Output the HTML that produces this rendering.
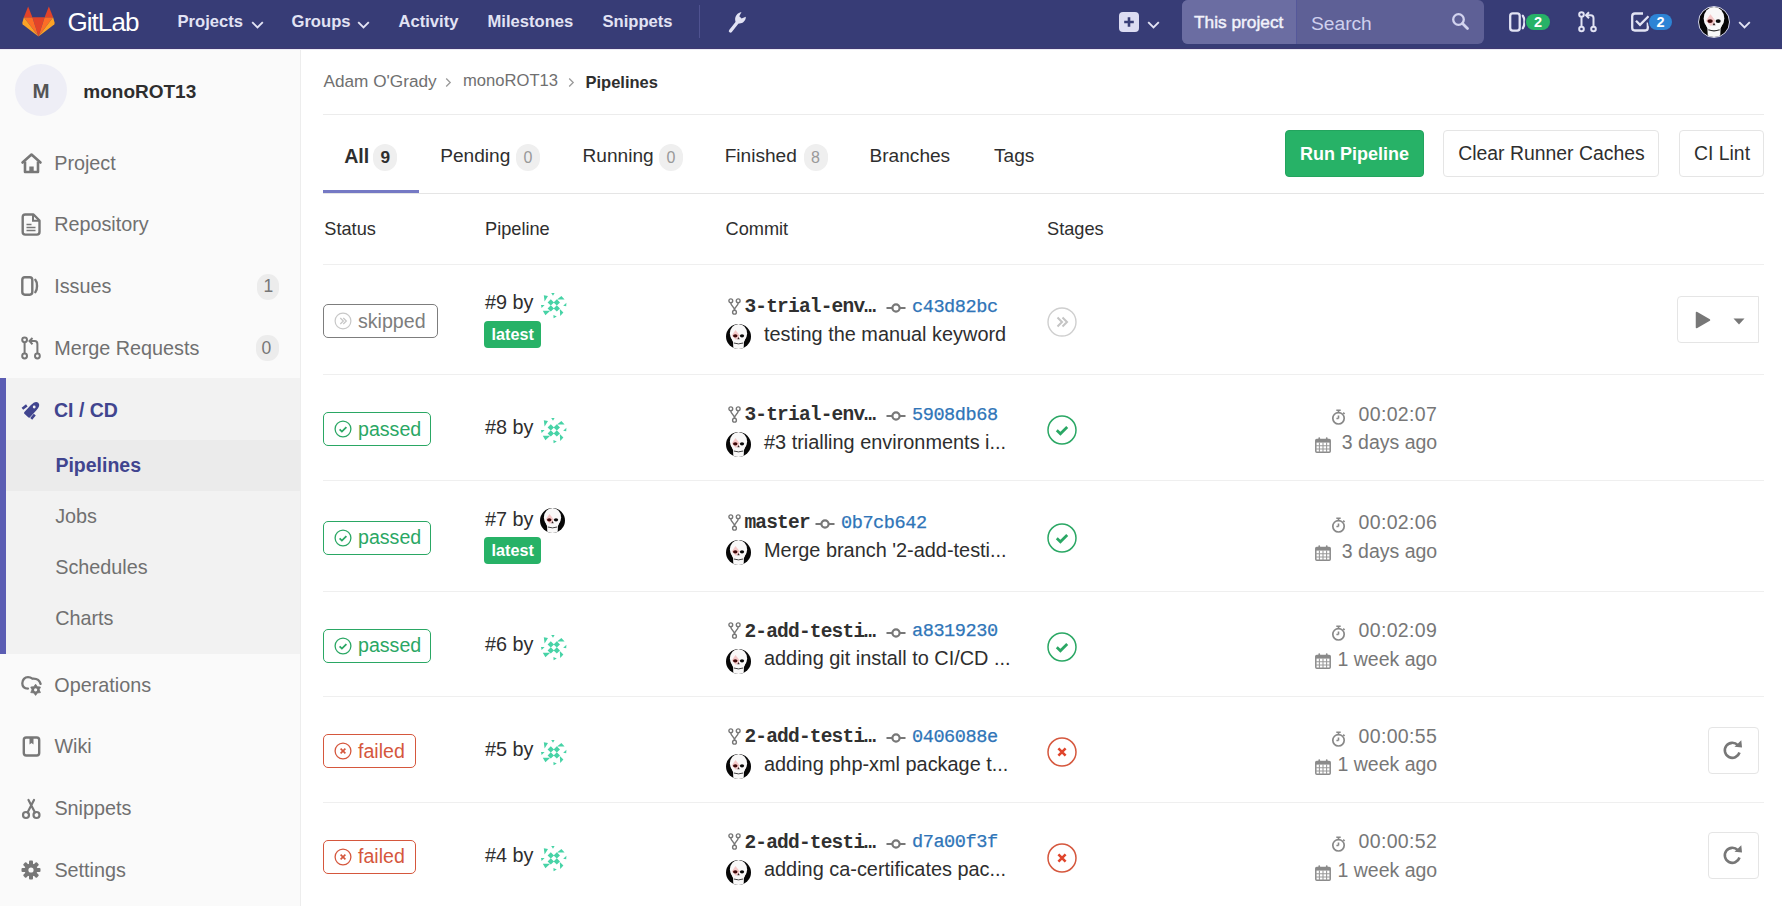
<!DOCTYPE html>
<html><head><meta charset="utf-8">
<style>
*{margin:0;padding:0;box-sizing:border-box}
html,body{width:1782px;height:906px;overflow:hidden;background:#fff;font-family:"Liberation Sans",sans-serif;color:#2e2e2e}
.a{position:absolute;white-space:nowrap;line-height:1}
svg{position:absolute;display:block;overflow:visible}
</style></head><body>
<div style="position:absolute;left:0px;top:0px;width:1782px;height:49px;background:#373c76"></div>
<div style="position:absolute;left:0px;top:48px;width:1782px;height:1px;background:#3e3872"></div>
<svg style="left:22px;top:6px;" width="33" height="31" viewBox="0 0 35 32" preserveAspectRatio="none">
    <polygon points="17.5,31.5 24,11.5 11,11.5" fill="#e24329"/>
    <polygon points="17.5,31.5 11,11.5 2,11.5" fill="#fc6d26"/>
    <polygon points="2,11.5 0.3,17.5 0.8,19 17.5,31.5" fill="#fca326"/>
    <polygon points="2,11.5 11,11.5 6.5,0.5" fill="#e24329"/>
    <polygon points="17.5,31.5 24,11.5 33,11.5" fill="#fc6d26"/>
    <polygon points="33,11.5 34.7,17.5 34.2,19 17.5,31.5" fill="#fca326"/>
    <polygon points="33,11.5 24,11.5 28.5,0.5" fill="#e24329"/></svg>
<div class="a" style="left:67.5px;top:8.90px;font-size:26px;color:#fff;font-weight:normal;font-family:'Liberation Sans',sans-serif;letter-spacing:-0.95px">GitLab</div>
<div class="a" style="left:177.5px;top:13.99px;font-size:16.6px;color:#e2e3f4;font-weight:bold;font-family:'Liberation Sans',sans-serif;">Projects</div>
<svg style="left:250.5px;top:20.5px;" width="13" height="8" viewBox="0 0 13 8" preserveAspectRatio="none"><path d="M1.2 1.2l5.3 5.3 5.3-5.3" fill="none" stroke="#e2e3f4" stroke-width="1.9"/></svg>
<div class="a" style="left:291.5px;top:13.99px;font-size:16.6px;color:#e2e3f4;font-weight:bold;font-family:'Liberation Sans',sans-serif;">Groups</div>
<svg style="left:356.5px;top:20.5px;" width="13" height="8" viewBox="0 0 13 8" preserveAspectRatio="none"><path d="M1.2 1.2l5.3 5.3 5.3-5.3" fill="none" stroke="#e2e3f4" stroke-width="1.9"/></svg>
<div class="a" style="left:398.5px;top:13.99px;font-size:16.6px;color:#e2e3f4;font-weight:bold;font-family:'Liberation Sans',sans-serif;">Activity</div>
<div class="a" style="left:487.5px;top:13.99px;font-size:16.6px;color:#e2e3f4;font-weight:bold;font-family:'Liberation Sans',sans-serif;">Milestones</div>
<div class="a" style="left:602.5px;top:13.99px;font-size:16.6px;color:#e2e3f4;font-weight:bold;font-family:'Liberation Sans',sans-serif;">Snippets</div>
<div style="position:absolute;left:699px;top:5px;width:1px;height:33px;background:#4f5290"></div>
<svg style="left:727px;top:10px;" width="21" height="24" viewBox="0 0 21 24" preserveAspectRatio="none"><path d="M3.5 21 L11 11.5" fill="none" stroke="#e2e3f4" stroke-width="3.4" stroke-linecap="round"/><path d="M9.2 12.8 C7 9.5 8 3.5 14.5 2 L12.3 6.2 L14.6 8.6 L18.8 6.8 C19 11.5 14.5 14.5 10.8 13.2 Z" fill="#e2e3f4"/></svg>
<div style="position:absolute;left:1119px;top:12px;width:20px;height:20px;border-radius:4px;background:#dcdcf2"></div>
<svg style="left:1119px;top:12px;" width="20" height="20" viewBox="0 0 20 20" preserveAspectRatio="none"><path d="M10 5.2v9.6M5.2 10h9.6" stroke="#373c76" stroke-width="2.6"/></svg>
<svg style="left:1146.5px;top:20.5px;" width="13" height="8" viewBox="0 0 13 8" preserveAspectRatio="none"><path d="M1.2 1.2l5.3 5.3 5.3-5.3" fill="none" stroke="#e2e3f4" stroke-width="1.9"/></svg>
<div style="position:absolute;left:1182px;top:0px;width:302px;height:44px;border-radius:6px;background:#5e6096;overflow:hidden"></div>
<div style="position:absolute;left:1182px;top:0px;width:114px;height:44px;border-radius:6px 0 0 6px;background:#6b6da2"></div>
<div style="position:absolute;left:1296px;top:0px;width:1px;height:44px;background:#55589a"></div>
<div class="a" style="left:1194.0px;top:14.29px;font-size:17.3px;color:#f2f2fb;font-weight:normal;font-family:'Liberation Sans',sans-serif;-webkit-text-stroke:0.45px #f2f2fb">This project</div>
<div class="a" style="left:1311.0px;top:13.68px;font-size:19.2px;color:#cfd0ee;font-weight:normal;font-family:'Liberation Sans',sans-serif;">Search</div>
<svg style="left:1451px;top:12px;" width="19" height="19" viewBox="0 0 19 19" preserveAspectRatio="none"><circle cx="7.5" cy="7.5" r="5.3" fill="none" stroke="#d2d3ef" stroke-width="2.3"/><path d="M11.5 11.5l5 5" stroke="#d2d3ef" stroke-width="2.8" stroke-linecap="round"/></svg>
<svg style="left:1509px;top:12px;" width="20" height="20" viewBox="0 0 20 20" preserveAspectRatio="none"><rect x="1.2" y="1.3" width="9.5" height="17.4" rx="2.6" fill="none" stroke="#e2e3f4" stroke-width="2.3"/><path d="M13.8 3.8c2.2 2.5 2.2 9.9 0 12.4" fill="none" stroke="#e2e3f4" stroke-width="2.3" stroke-linecap="round"/></svg>
<div style="position:absolute;left:1526px;top:14px;width:24px;height:16px;border-radius:8px;background:#27b267;box-shadow:0 0 0 1.2px #373c76"></div>
<div class="a" style="left:1534.0px;top:14.68px;font-size:14.5px;color:#fff;font-weight:bold;font-family:'Liberation Sans',sans-serif;">2</div>
<svg style="left:1578px;top:11px;" width="20" height="22" viewBox="0 0 20 22" preserveAspectRatio="none"><circle cx="3.5" cy="3.5" r="2.3" fill="none" stroke="#e2e3f4" stroke-width="2"/><circle cx="3.5" cy="18" r="2.3" fill="none" stroke="#e2e3f4" stroke-width="2"/><circle cx="15.5" cy="18" r="2.3" fill="none" stroke="#e2e3f4" stroke-width="2"/><path d="M3.5 6v9.5M15.5 15.5V7c0-1.7-1-2.8-2.8-2.8H9" fill="none" stroke="#e2e3f4" stroke-width="2"/><path d="M11 1.2l-3 3 3 3" fill="none" stroke="#e2e3f4" stroke-width="2"/></svg>
<svg style="left:1631px;top:12px;" width="20" height="20" viewBox="0 0 20 20" preserveAspectRatio="none"><path d="M16.8 10.5v5.3c0 1.6-1.1 2.7-2.7 2.7H3.9c-1.6 0-2.7-1.1-2.7-2.7V4.2c0-1.6 1.1-2.7 2.7-2.7H12" fill="none" stroke="#e2e3f4" stroke-width="2.3"/><path d="M5 8.8l4 4 8.5-8.5" fill="none" stroke="#e2e3f4" stroke-width="2.3"/></svg>
<div style="position:absolute;left:1649px;top:14px;width:23px;height:16px;border-radius:8px;background:#2d84d5;box-shadow:0 0 0 1.2px #373c76"></div>
<div class="a" style="left:1656.5px;top:14.68px;font-size:14.5px;color:#fff;font-weight:bold;font-family:'Liberation Sans',sans-serif;">2</div>
<div style="position:absolute;left:1698px;top:6px;width:32px;height:32px;border-radius:50%;background:#070707;border:1.5px solid #d6d7f0;overflow:hidden"><svg style="left:0;top:0" width="100%" height="100%" viewBox="0 0 100 100"><ellipse cx="50" cy="38" rx="34.5" ry="38" fill="#f9f8f8"/><path d="M20 52h60l-8 20-1.5 30h-41l-1.5-30z" fill="#f9f8f8"/><polygon points="38,24 23,46 40,64 55,46" fill="#f2a0a0" opacity="0.55"/><ellipse cx="37" cy="47" rx="9" ry="6.5" fill="#3d0808"/><ellipse cx="64" cy="47" rx="8.5" ry="6.5" fill="#0a0a0a"/><path d="M50 52l-5 9h10z" fill="#3a2020"/><path d="M31 76 Q50 83 69 76" fill="none" stroke="#2a2a2a" stroke-width="3.5"/></svg></div>
<svg style="left:1737.5px;top:20.5px;" width="13" height="8" viewBox="0 0 13 8" preserveAspectRatio="none"><path d="M1.2 1.2l5.3 5.3 5.3-5.3" fill="none" stroke="#e2e3f4" stroke-width="1.9"/></svg>
<div style="position:absolute;left:0px;top:49px;width:300px;height:857px;background:#fafafa"></div>
<div style="position:absolute;left:300px;top:49px;width:1px;height:857px;background:#ededed"></div>
<div style="position:absolute;left:15px;top:64px;width:52px;height:52px;border-radius:50%;background:#eeeef6"></div>
<div class="a" style="left:32.5px;top:81.08px;font-size:20.5px;color:#555;font-weight:bold;font-family:'Liberation Sans',sans-serif;">M</div>
<div class="a" style="left:83.3px;top:82.35px;font-size:19px;color:#2e2e2e;font-weight:bold;font-family:'Liberation Sans',sans-serif;">monoROT13</div>
<svg style="left:20px;top:152px;" width="23" height="22" viewBox="0 0 23 22" preserveAspectRatio="none"><path d="M2.5 10.5 L11.5 2.5 L20.5 10.5" fill="none" stroke="#777" stroke-width="2.6" stroke-linejoin="round" stroke-linecap="round"/><path d="M5 9.5v10.5h13V9.5" fill="none" stroke="#777" stroke-width="2.6" stroke-linejoin="round"/><rect x="9.3" y="14.5" width="4.4" height="5.5" fill="#777"/></svg>
<div class="a" style="left:54.2px;top:153.87px;font-size:19.8px;color:#707070;font-weight:normal;font-family:'Liberation Sans',sans-serif;">Project</div>
<svg style="left:21px;top:213px;" width="21" height="23" viewBox="0 0 21 23" preserveAspectRatio="none"><path d="M4.3 1.5h8.2l6 6v11.5c0 1.6-1.2 2.6-2.6 2.6H4.3c-1.6 0-2.6-1-2.6-2.6V4.1c0-1.6 1-2.6 2.6-2.6z" fill="none" stroke="#777" stroke-width="2.4" stroke-linejoin="round"/><path d="M12 1.8v6h6" fill="none" stroke="#777" stroke-width="2"/><path d="M5.5 11.5h5M5.5 14.5h9M5.5 17.5h9" stroke="#777" stroke-width="1.6"/></svg>
<div class="a" style="left:54.2px;top:215.37px;font-size:19.8px;color:#707070;font-weight:normal;font-family:'Liberation Sans',sans-serif;">Repository</div>
<svg style="left:21px;top:276px;" width="20" height="20" viewBox="0 0 20 20" preserveAspectRatio="none"><rect x="1.3" y="1.3" width="10" height="17.4" rx="2.6" fill="none" stroke="#777" stroke-width="2.4"/><path d="M14.3 3.8c2.3 2.5 2.3 9.9 0 12.4" fill="none" stroke="#777" stroke-width="2.4" stroke-linecap="round"/></svg>
<div class="a" style="left:54.2px;top:276.87px;font-size:19.8px;color:#707070;font-weight:normal;font-family:'Liberation Sans',sans-serif;">Issues</div>
<div style="position:absolute;left:257px;top:273.5px;width:22px;height:26px;border-radius:11px;background:#ececec"></div>
<div class="a" style="left:263.5px;top:278.12px;font-size:17.5px;color:#777;font-weight:normal;font-family:'Liberation Sans',sans-serif;">1</div>
<svg style="left:21px;top:336px;" width="21" height="24" viewBox="0 0 21 24" preserveAspectRatio="none"><circle cx="3.6" cy="3.8" r="2.4" fill="none" stroke="#777" stroke-width="2"/><circle cx="3.6" cy="20" r="2.4" fill="none" stroke="#777" stroke-width="2"/><circle cx="16.4" cy="20" r="2.4" fill="none" stroke="#777" stroke-width="2"/><path d="M3.6 6.2v11.4M16.4 17.6V8c0-1.8-1-2.9-2.8-2.9H9.5" fill="none" stroke="#777" stroke-width="2"/><path d="M11.5 2l-3 3.1 3 3.1" fill="none" stroke="#777" stroke-width="2"/></svg>
<div class="a" style="left:54.2px;top:338.87px;font-size:19.8px;color:#707070;font-weight:normal;font-family:'Liberation Sans',sans-serif;">Merge Requests</div>
<div style="position:absolute;left:255.5px;top:335px;width:23px;height:26px;border-radius:11px;background:#ececec"></div>
<div class="a" style="left:261.5px;top:339.62px;font-size:17.5px;color:#777;font-weight:normal;font-family:'Liberation Sans',sans-serif;">0</div>
<div style="position:absolute;left:0px;top:378px;width:300px;height:276px;background:#f2f2f2"></div>
<div style="position:absolute;left:0px;top:378px;width:5.5px;height:276px;background:#5b5db3"></div>
<div style="position:absolute;left:5.5px;top:440px;width:294.5px;height:51px;background:#ebebeb"></div>
<svg style="left:20px;top:399px;" width="21" height="21" viewBox="0 0 21 21" preserveAspectRatio="none"><path d="M0,-2.6 Q0,-3.8 1.3,-3.8 L10.5,-3.8 Q17.5,-3.8 17.5,0 Q17.5,3.8 10.5,3.8 L1.3,3.8 Q0,3.8 0,2.6 Z" fill="#41458f" transform="translate(6.3,16.6) rotate(-47)"/><circle cx="14.2" cy="8" r="1.4" fill="#f2f2f2"/><path d="M2.4 9.8L6.8 6.4M11.2 19.8L14.8 15.6" stroke="#41458f" stroke-width="2.6"/></svg>
<div class="a" style="left:54.0px;top:400.62px;font-size:19.5px;color:#41458f;font-weight:bold;font-family:'Liberation Sans',sans-serif;">CI / CD</div>
<div class="a" style="left:55.4px;top:456.12px;font-size:19.5px;color:#41458f;font-weight:bold;font-family:'Liberation Sans',sans-serif;">Pipelines</div>
<div class="a" style="left:55.2px;top:507.07px;font-size:19.8px;color:#707070;font-weight:normal;font-family:'Liberation Sans',sans-serif;">Jobs</div>
<div class="a" style="left:55.2px;top:557.87px;font-size:19.8px;color:#707070;font-weight:normal;font-family:'Liberation Sans',sans-serif;">Schedules</div>
<div class="a" style="left:55.2px;top:609.07px;font-size:19.8px;color:#707070;font-weight:normal;font-family:'Liberation Sans',sans-serif;">Charts</div>
<svg style="left:21px;top:675px;" width="22" height="22" viewBox="0 0 22 22" preserveAspectRatio="none"><path d="M7 13.6 C3.2 13.6 1.3 11.2 1.3 8.3 C1.3 4.8 3.8 2.1 7 2.1 C8.9 2.1 10.3 2.8 11.4 3.7 C15.2 3.4 18.6 5.3 19.6 8.9" fill="none" stroke="#777" stroke-width="2.3" stroke-linecap="round"/><polygon points="14.60,9.20 16.40,11.68 19.45,12.00 18.20,14.80 19.45,17.60 16.40,17.92 14.60,20.40 12.80,17.92 9.75,17.60 11.00,14.80 9.75,12.00 12.80,11.68" fill="#777" stroke="#777" stroke-width="0.8" stroke-linejoin="round"/><circle cx="14.6" cy="14.8" r="1.6" fill="#fafafa"/></svg>
<div class="a" style="left:54.3px;top:676.27px;font-size:19.8px;color:#707070;font-weight:normal;font-family:'Liberation Sans',sans-serif;">Operations</div>
<svg style="left:22px;top:736px;" width="19" height="21" viewBox="0 0 19 21" preserveAspectRatio="none"><rect x="1.8" y="1.5" width="15.4" height="18" rx="2.5" fill="none" stroke="#777" stroke-width="2.4"/><path d="M7.5 1.5v7l2-1.5 2 1.5v-7" fill="#777"/></svg>
<div class="a" style="left:54.4px;top:737.37px;font-size:19.8px;color:#707070;font-weight:normal;font-family:'Liberation Sans',sans-serif;">Wiki</div>
<svg style="left:21px;top:798px;" width="21" height="22" viewBox="0 0 21 22" preserveAspectRatio="none"><circle cx="5" cy="17" r="3" fill="none" stroke="#777" stroke-width="2.2"/><circle cx="15.5" cy="17" r="3" fill="none" stroke="#777" stroke-width="2.2"/><path d="M6.5 14.5 L13 2 M14 14.5 L7.5 2" stroke="#777" stroke-width="2.2" stroke-linecap="round"/></svg>
<div class="a" style="left:54.4px;top:798.87px;font-size:19.8px;color:#707070;font-weight:normal;font-family:'Liberation Sans',sans-serif;">Snippets</div>
<svg style="left:21px;top:860px;" width="20" height="20" viewBox="0 0 20 20" preserveAspectRatio="none"><rect x="8" y="0.5" width="4" height="19" rx="1" fill="#777" transform="rotate(0 10 10)"/><rect x="8" y="0.5" width="4" height="19" rx="1" fill="#777" transform="rotate(45 10 10)"/><rect x="8" y="0.5" width="4" height="19" rx="1" fill="#777" transform="rotate(90 10 10)"/><rect x="8" y="0.5" width="4" height="19" rx="1" fill="#777" transform="rotate(135 10 10)"/><circle cx="10" cy="10" r="6.5" fill="#777"/><circle cx="10" cy="10" r="2.6" fill="#fafafa"/></svg>
<div class="a" style="left:54.4px;top:860.87px;font-size:19.8px;color:#707070;font-weight:normal;font-family:'Liberation Sans',sans-serif;">Settings</div>
<div class="a" style="left:323.5px;top:72.98px;font-size:17.2px;color:#707070;font-weight:normal;font-family:'Liberation Sans',sans-serif;">Adam O'Grady</div>
<svg style="left:445px;top:77px;" width="7" height="11" viewBox="0 0 7 11" preserveAspectRatio="none"><path d="M1.2 1.5l4 4-4 4" fill="none" stroke="#999" stroke-width="1.3"/></svg>
<div class="a" style="left:463.0px;top:73.49px;font-size:16.6px;color:#707070;font-weight:normal;font-family:'Liberation Sans',sans-serif;">monoROT13</div>
<svg style="left:568px;top:77px;" width="7" height="11" viewBox="0 0 7 11" preserveAspectRatio="none"><path d="M1.2 1.5l4 4-4 4" fill="none" stroke="#999" stroke-width="1.3"/></svg>
<div class="a" style="left:585.5px;top:73.57px;font-size:16.5px;color:#2e2e2e;font-weight:bold;font-family:'Liberation Sans',sans-serif;">Pipelines</div>
<div style="position:absolute;left:323px;top:114px;width:1441px;height:1px;background:#ececec"></div>
<div class="a" style="left:344.2px;top:146.84px;font-size:19.6px;color:#2e2e2e;font-weight:bold;font-family:'Liberation Sans',sans-serif;">All</div>
<div style="position:absolute;left:373px;top:144px;width:24px;height:27px;border-radius:12px;background:#efefef"></div>
<div class="a" style="left:380.5px;top:148.59px;font-size:17.3px;color:#2e2e2e;font-weight:bold;font-family:'Liberation Sans',sans-serif;">9</div>
<div class="a" style="left:440.2px;top:146.46px;font-size:19.1px;color:#2e2e2e;font-weight:normal;font-family:'Liberation Sans',sans-serif;">Pending</div>
<div style="position:absolute;left:516px;top:144px;width:24px;height:27px;border-radius:12px;background:#efefef"></div>
<div class="a" style="left:523.6px;top:150.10px;font-size:16px;color:#999;font-weight:normal;font-family:'Liberation Sans',sans-serif;">0</div>
<div class="a" style="left:582.5px;top:146.46px;font-size:19.1px;color:#2e2e2e;font-weight:normal;font-family:'Liberation Sans',sans-serif;">Running</div>
<div style="position:absolute;left:659px;top:144px;width:24px;height:27px;border-radius:12px;background:#efefef"></div>
<div class="a" style="left:666.6px;top:150.10px;font-size:16px;color:#999;font-weight:normal;font-family:'Liberation Sans',sans-serif;">0</div>
<div class="a" style="left:724.7px;top:146.46px;font-size:19.1px;color:#2e2e2e;font-weight:normal;font-family:'Liberation Sans',sans-serif;">Finished</div>
<div style="position:absolute;left:803.5px;top:144px;width:24px;height:27px;border-radius:12px;background:#efefef"></div>
<div class="a" style="left:811.1px;top:150.10px;font-size:16px;color:#999;font-weight:normal;font-family:'Liberation Sans',sans-serif;">8</div>
<div class="a" style="left:869.5px;top:146.46px;font-size:19.1px;color:#2e2e2e;font-weight:normal;font-family:'Liberation Sans',sans-serif;">Branches</div>
<div class="a" style="left:994.0px;top:146.46px;font-size:19.1px;color:#2e2e2e;font-weight:normal;font-family:'Liberation Sans',sans-serif;">Tags</div>
<div style="position:absolute;left:323px;top:193px;width:1441px;height:1px;background:#e5e5e5"></div>
<div style="position:absolute;left:323px;top:190px;width:96px;height:3px;background:#7579c4"></div>
<div style="position:absolute;left:1285px;top:130px;width:139px;height:47px;border-radius:4px;background:#27b267;border:1px solid #23a45e"></div>
<div class="a" style="left:1300.0px;top:144.90px;font-size:18px;color:#fff;font-weight:bold;font-family:'Liberation Sans',sans-serif;">Run Pipeline</div>
<div style="position:absolute;left:1443px;top:130px;width:216px;height:47px;border-radius:4px;background:#fff;border:1px solid #e5e5e5"></div>
<div class="a" style="left:1458.2px;top:143.71px;font-size:19.4px;color:#2e2e2e;font-weight:normal;font-family:'Liberation Sans',sans-serif;">Clear Runner Caches</div>
<div style="position:absolute;left:1679px;top:130px;width:85px;height:47px;border-radius:4px;background:#fff;border:1px solid #e5e5e5"></div>
<div class="a" style="left:1694.0px;top:143.71px;font-size:19.4px;color:#2e2e2e;font-weight:normal;font-family:'Liberation Sans',sans-serif;">CI Lint</div>
<div class="a" style="left:324.3px;top:220.23px;font-size:18.2px;color:#2e2e2e;font-weight:normal;font-family:'Liberation Sans',sans-serif;">Status</div>
<div class="a" style="left:485.0px;top:220.23px;font-size:18.2px;color:#2e2e2e;font-weight:normal;font-family:'Liberation Sans',sans-serif;">Pipeline</div>
<div class="a" style="left:725.5px;top:220.23px;font-size:18.2px;color:#2e2e2e;font-weight:normal;font-family:'Liberation Sans',sans-serif;">Commit</div>
<div class="a" style="left:1047.0px;top:220.23px;font-size:18.2px;color:#2e2e2e;font-weight:normal;font-family:'Liberation Sans',sans-serif;">Stages</div>
<div style="position:absolute;left:323px;top:264px;width:1441px;height:1px;background:#efefef"></div>
<div style="position:absolute;left:323px;top:374px;width:1441px;height:1px;background:#efefef"></div>
<div style="position:absolute;left:323px;top:304.4px;width:115px;height:34px;border:1.6px solid #7d7d7d;border-radius:5px;background:#fff"></div>
<svg style="left:334px;top:312.4px;" width="18" height="18" viewBox="0 0 18 18" preserveAspectRatio="none"><circle cx="9" cy="9" r="7.9" fill="none" stroke="#c8c8c8" stroke-width="1.2"/><path d="M6.3 6l3 3-3 3M9.3 6l3 3-3 3" fill="none" stroke="#c8c8c8" stroke-width="1.3"/></svg>
<div class="a" style="left:358.0px;top:311.74px;font-size:19.6px;color:#7d7d7d;font-weight:normal;font-family:'Liberation Sans',sans-serif;">skipped</div>
<div style="position:absolute;left:484px;top:321.0px;width:57px;height:27px;border-radius:4px;background:#27b267"></div>
<div class="a" style="left:491.6px;top:326.23px;font-size:16.2px;color:#fff;font-weight:bold;font-family:'Liberation Sans',sans-serif;">latest</div>
<div class="a" style="left:485.0px;top:293.37px;font-size:19.8px;color:#2e2e2e;font-weight:normal;font-family:'Liberation Sans',sans-serif;">#9 by</div>
<svg style="left:540.5px;top:293.0px" width="25" height="25" viewBox="0 0 25 25"><g fill="#47d3a6"><path d="M9.8 6.2l3.2 3.2-3.2 3.2-3.2-3.2z M15.8 6.2l3.2 3.2-3.2 3.2-3.2-3.2z M9.8 12.2l3.2 3.2-3.2 3.2-3.2-3.2z M15.8 12.2l3.2 3.2-3.2 3.2-3.2-3.2z"/><path d="M10.2 0h3.4l-1.6 2.8z M2.8 2.2l4.2 0.8-3.4 5.6z M16 6.5h7.6l-3.2-3.6z M22.2 12.8l3.2-3-0.2 3.4z M0 12h3.6l-3 3z M1.8 17.8h7.4l-4.8 4.4z M18.8 16l3.6 3.6-3.2 3.4z M12.4 22l3.4 1.6-3.2 1.6z"/></g></svg>
<svg style="left:728px;top:297.9px;" width="13" height="17" viewBox="0 0 13 17" preserveAspectRatio="none"><circle cx="2.8" cy="2.8" r="1.9" fill="none" stroke="#777" stroke-width="1.4"/><circle cx="10.2" cy="2.8" r="1.9" fill="none" stroke="#777" stroke-width="1.4"/><circle cx="6.5" cy="14.2" r="1.9" fill="none" stroke="#777" stroke-width="1.4"/><path d="M2.8 4.7c0 3.5 3.7 3.5 3.7 7.6M10.2 4.7c0 3.5-3.7 3.5-3.7 7.6" fill="none" stroke="#777" stroke-width="1.4"/></svg>
<div class="a" style="left:744.4px;top:298.28px;font-size:19.5px;color:#303030;font-weight:bold;font-family:'Liberation Mono',monospace;letter-spacing:-0.8px">3-trial-env…</div>
<svg style="left:886px;top:303.1px;" width="20" height="10" viewBox="0 0 20 10" preserveAspectRatio="none"><circle cx="10" cy="5" r="3.6" fill="none" stroke="#777" stroke-width="2.2"/><path d="M0.5 5h5.5M14 5h5.5" stroke="#777" stroke-width="2.2"/></svg>
<div class="a" style="left:912.0px;top:298.96px;font-size:18.6px;color:#2f75b8;font-weight:normal;font-family:'Liberation Mono',monospace;-webkit-text-stroke:0.25px #2f75b8;letter-spacing:-0.45px">c43d82bc</div>
<div style="position:absolute;left:726px;top:324.2px;width:25px;height:25px;border-radius:50%;background:#070707;overflow:hidden"><svg style="left:0;top:0" width="100%" height="100%" viewBox="0 0 100 100"><ellipse cx="50" cy="38" rx="34.5" ry="38" fill="#f9f8f8"/><path d="M20 52h60l-8 20-1.5 30h-41l-1.5-30z" fill="#f9f8f8"/><polygon points="38,24 23,46 40,64 55,46" fill="#f2a0a0" opacity="0.55"/><ellipse cx="37" cy="47" rx="9" ry="6.5" fill="#3d0808"/><ellipse cx="64" cy="47" rx="8.5" ry="6.5" fill="#0a0a0a"/><path d="M50 52l-5 9h10z" fill="#3a2020"/><path d="M31 76 Q50 83 69 76" fill="none" stroke="#2a2a2a" stroke-width="3.5"/></svg></div>
<div class="a" style="left:764.0px;top:324.79px;font-size:19.9px;color:#2e2e2e;font-weight:normal;font-family:'Liberation Sans',sans-serif;">testing the manual keyword</div>
<svg style="left:1047px;top:307.1px;" width="30" height="30" viewBox="0 0 30 30" preserveAspectRatio="none"><circle cx="15" cy="15" r="14" fill="#fff" stroke="#cfcfcf" stroke-width="1.4"/><path d="M10.5 10.5l4.5 4.5-4.5 4.5M15.5 10.5l4.5 4.5-4.5 4.5" fill="none" stroke="#c4c4c4" stroke-width="2"/></svg>
<div style="position:absolute;left:1677px;top:296.2px;width:82px;height:47px;border:1px solid #e5e5e5;border-radius:4px 0 0 4px;background:#fff"></div>
<svg style="left:1695px;top:310.7px;" width="16" height="18" viewBox="0 0 16 18" preserveAspectRatio="none"><path d="M1.5 1.5v15l13-7.5z" fill="#777" stroke="#777" stroke-width="1.5" stroke-linejoin="round"/></svg>
<svg style="left:1733px;top:317.7px;" width="12" height="7" viewBox="0 0 12 7" preserveAspectRatio="none"><path d="M0.5 0.5h11l-5.5 6z" fill="#777"/></svg>
<div style="position:absolute;left:323px;top:480px;width:1441px;height:1px;background:#efefef"></div>
<div style="position:absolute;left:323px;top:412.2px;width:108px;height:34px;border:1.6px solid #2aa764;border-radius:5px;background:#fff"></div>
<svg style="left:334px;top:420.2px;" width="18" height="18" viewBox="0 0 18 18" preserveAspectRatio="none"><circle cx="9" cy="9" r="7.9" fill="none" stroke="#2aa764" stroke-width="1.3"/><path d="M5.6 9.3l2.3 2.3 4.5-4.5" fill="none" stroke="#2aa764" stroke-width="1.8"/></svg>
<div class="a" style="left:358.0px;top:419.54px;font-size:19.6px;color:#2aa764;font-weight:normal;font-family:'Liberation Sans',sans-serif;">passed</div>
<div class="a" style="left:485.0px;top:418.27px;font-size:19.8px;color:#2e2e2e;font-weight:normal;font-family:'Liberation Sans',sans-serif;">#8 by</div>
<svg style="left:540.5px;top:417.9px" width="25" height="25" viewBox="0 0 25 25"><g fill="#47d3a6"><path d="M9.8 6.2l3.2 3.2-3.2 3.2-3.2-3.2z M15.8 6.2l3.2 3.2-3.2 3.2-3.2-3.2z M9.8 12.2l3.2 3.2-3.2 3.2-3.2-3.2z M15.8 12.2l3.2 3.2-3.2 3.2-3.2-3.2z"/><path d="M10.2 0h3.4l-1.6 2.8z M2.8 2.2l4.2 0.8-3.4 5.6z M16 6.5h7.6l-3.2-3.6z M22.2 12.8l3.2-3-0.2 3.4z M0 12h3.6l-3 3z M1.8 17.8h7.4l-4.8 4.4z M18.8 16l3.6 3.6-3.2 3.4z M12.4 22l3.4 1.6-3.2 1.6z"/></g></svg>
<svg style="left:728px;top:405.7px;" width="13" height="17" viewBox="0 0 13 17" preserveAspectRatio="none"><circle cx="2.8" cy="2.8" r="1.9" fill="none" stroke="#777" stroke-width="1.4"/><circle cx="10.2" cy="2.8" r="1.9" fill="none" stroke="#777" stroke-width="1.4"/><circle cx="6.5" cy="14.2" r="1.9" fill="none" stroke="#777" stroke-width="1.4"/><path d="M2.8 4.7c0 3.5 3.7 3.5 3.7 7.6M10.2 4.7c0 3.5-3.7 3.5-3.7 7.6" fill="none" stroke="#777" stroke-width="1.4"/></svg>
<div class="a" style="left:744.4px;top:406.08px;font-size:19.5px;color:#303030;font-weight:bold;font-family:'Liberation Mono',monospace;letter-spacing:-0.8px">3-trial-env…</div>
<svg style="left:886px;top:410.9px;" width="20" height="10" viewBox="0 0 20 10" preserveAspectRatio="none"><circle cx="10" cy="5" r="3.6" fill="none" stroke="#777" stroke-width="2.2"/><path d="M0.5 5h5.5M14 5h5.5" stroke="#777" stroke-width="2.2"/></svg>
<div class="a" style="left:912.0px;top:406.76px;font-size:18.6px;color:#2f75b8;font-weight:normal;font-family:'Liberation Mono',monospace;-webkit-text-stroke:0.25px #2f75b8;letter-spacing:-0.45px">5908db68</div>
<div style="position:absolute;left:726px;top:432.0px;width:25px;height:25px;border-radius:50%;background:#070707;overflow:hidden"><svg style="left:0;top:0" width="100%" height="100%" viewBox="0 0 100 100"><ellipse cx="50" cy="38" rx="34.5" ry="38" fill="#f9f8f8"/><path d="M20 52h60l-8 20-1.5 30h-41l-1.5-30z" fill="#f9f8f8"/><polygon points="38,24 23,46 40,64 55,46" fill="#f2a0a0" opacity="0.55"/><ellipse cx="37" cy="47" rx="9" ry="6.5" fill="#3d0808"/><ellipse cx="64" cy="47" rx="8.5" ry="6.5" fill="#0a0a0a"/><path d="M50 52l-5 9h10z" fill="#3a2020"/><path d="M31 76 Q50 83 69 76" fill="none" stroke="#2a2a2a" stroke-width="3.5"/></svg></div>
<div class="a" style="left:764.0px;top:432.58px;font-size:19.9px;color:#2e2e2e;font-weight:normal;font-family:'Liberation Sans',sans-serif;">#3 trialling environments i...</div>
<svg style="left:1047px;top:414.9px;" width="30" height="30" viewBox="0 0 30 30" preserveAspectRatio="none"><circle cx="15" cy="15" r="14" fill="#fff" stroke="#2aa764" stroke-width="1.5"/><path d="M9.8 15.3l3.6 3.4 6.8-6.8" fill="none" stroke="#2aa764" stroke-width="2.8"/></svg>
<svg style="left:1331px;top:408.6px;" width="15" height="16" viewBox="0 0 15 16" preserveAspectRatio="none"><circle cx="7.5" cy="9.3" r="5.7" fill="none" stroke="#888" stroke-width="1.7"/><path d="M5.3 1.2h4.4M7.5 1.2v2.4M12.2 3.6l1.4 1.4M7.5 9.5V6.6M7.5 9.5H5.4" fill="none" stroke="#888" stroke-width="1.6"/></svg>
<div class="a" style="left:1358.5px;top:404.53px;font-size:19.5px;color:#777;font-weight:normal;font-family:'Liberation Sans',sans-serif;letter-spacing:0.35px">00:02:07</div>
<svg style="left:1314.5px;top:436.8px;" width="16" height="16" viewBox="0 0 16 16" preserveAspectRatio="none"><rect x="0.8" y="2.6" width="14.4" height="12.6" rx="1" fill="#fff" stroke="#8a8a8a" stroke-width="1.5"/><rect x="0.8" y="2.6" width="14.4" height="3" fill="#8a8a8a"/><path d="M4.4 5.5v9.7M8 5.5v9.7M11.6 5.5v9.7M0.8 8.7h14.4M0.8 12h14.4" stroke="#9a9a9a" stroke-width="1.1"/><rect x="3.4" y="0.2" width="1.7" height="3.8" rx="0.8" fill="#8a8a8a"/><rect x="10.9" y="0.2" width="1.7" height="3.8" rx="0.8" fill="#8a8a8a"/></svg>
<div class="a" style="right:344.8px;top:433.23px;font-size:19.5px;color:#777">3 days ago</div>
<div style="position:absolute;left:323px;top:591px;width:1441px;height:1px;background:#efefef"></div>
<div style="position:absolute;left:323px;top:520.5px;width:108px;height:34px;border:1.6px solid #2aa764;border-radius:5px;background:#fff"></div>
<svg style="left:334px;top:528.5px;" width="18" height="18" viewBox="0 0 18 18" preserveAspectRatio="none"><circle cx="9" cy="9" r="7.9" fill="none" stroke="#2aa764" stroke-width="1.3"/><path d="M5.6 9.3l2.3 2.3 4.5-4.5" fill="none" stroke="#2aa764" stroke-width="1.8"/></svg>
<div class="a" style="left:358.0px;top:527.89px;font-size:19.6px;color:#2aa764;font-weight:normal;font-family:'Liberation Sans',sans-serif;">passed</div>
<div style="position:absolute;left:484px;top:537.1px;width:57px;height:27px;border-radius:4px;background:#27b267"></div>
<div class="a" style="left:491.6px;top:542.38px;font-size:16.2px;color:#fff;font-weight:bold;font-family:'Liberation Sans',sans-serif;">latest</div>
<div class="a" style="left:485.0px;top:509.52px;font-size:19.8px;color:#2e2e2e;font-weight:normal;font-family:'Liberation Sans',sans-serif;">#7 by</div>
<div style="position:absolute;left:539.8px;top:507.8px;width:25px;height:25px;border-radius:50%;background:#070707;overflow:hidden"><svg style="left:0;top:0" width="100%" height="100%" viewBox="0 0 100 100"><ellipse cx="50" cy="38" rx="34.5" ry="38" fill="#f9f8f8"/><path d="M20 52h60l-8 20-1.5 30h-41l-1.5-30z" fill="#f9f8f8"/><polygon points="38,24 23,46 40,64 55,46" fill="#f2a0a0" opacity="0.55"/><ellipse cx="37" cy="47" rx="9" ry="6.5" fill="#3d0808"/><ellipse cx="64" cy="47" rx="8.5" ry="6.5" fill="#0a0a0a"/><path d="M50 52l-5 9h10z" fill="#3a2020"/><path d="M31 76 Q50 83 69 76" fill="none" stroke="#2a2a2a" stroke-width="3.5"/></svg></div>
<svg style="left:728px;top:514.0px;" width="13" height="17" viewBox="0 0 13 17" preserveAspectRatio="none"><circle cx="2.8" cy="2.8" r="1.9" fill="none" stroke="#777" stroke-width="1.4"/><circle cx="10.2" cy="2.8" r="1.9" fill="none" stroke="#777" stroke-width="1.4"/><circle cx="6.5" cy="14.2" r="1.9" fill="none" stroke="#777" stroke-width="1.4"/><path d="M2.8 4.7c0 3.5 3.7 3.5 3.7 7.6M10.2 4.7c0 3.5-3.7 3.5-3.7 7.6" fill="none" stroke="#777" stroke-width="1.4"/></svg>
<div class="a" style="left:744.4px;top:514.43px;font-size:19.5px;color:#303030;font-weight:bold;font-family:'Liberation Mono',monospace;letter-spacing:-0.8px">master</div>
<svg style="left:815px;top:519.2px;" width="20" height="10" viewBox="0 0 20 10" preserveAspectRatio="none"><circle cx="10" cy="5" r="3.6" fill="none" stroke="#777" stroke-width="2.2"/><path d="M0.5 5h5.5M14 5h5.5" stroke="#777" stroke-width="2.2"/></svg>
<div class="a" style="left:841.0px;top:515.11px;font-size:18.6px;color:#2f75b8;font-weight:normal;font-family:'Liberation Mono',monospace;-webkit-text-stroke:0.25px #2f75b8;letter-spacing:-0.45px">0b7cb642</div>
<div style="position:absolute;left:726px;top:540.3px;width:25px;height:25px;border-radius:50%;background:#070707;overflow:hidden"><svg style="left:0;top:0" width="100%" height="100%" viewBox="0 0 100 100"><ellipse cx="50" cy="38" rx="34.5" ry="38" fill="#f9f8f8"/><path d="M20 52h60l-8 20-1.5 30h-41l-1.5-30z" fill="#f9f8f8"/><polygon points="38,24 23,46 40,64 55,46" fill="#f2a0a0" opacity="0.55"/><ellipse cx="37" cy="47" rx="9" ry="6.5" fill="#3d0808"/><ellipse cx="64" cy="47" rx="8.5" ry="6.5" fill="#0a0a0a"/><path d="M50 52l-5 9h10z" fill="#3a2020"/><path d="M31 76 Q50 83 69 76" fill="none" stroke="#2a2a2a" stroke-width="3.5"/></svg></div>
<div class="a" style="left:764.0px;top:540.93px;font-size:19.9px;color:#2e2e2e;font-weight:normal;font-family:'Liberation Sans',sans-serif;">Merge branch '2-add-testi...</div>
<svg style="left:1047px;top:523.2px;" width="30" height="30" viewBox="0 0 30 30" preserveAspectRatio="none"><circle cx="15" cy="15" r="14" fill="#fff" stroke="#2aa764" stroke-width="1.5"/><path d="M9.8 15.3l3.6 3.4 6.8-6.8" fill="none" stroke="#2aa764" stroke-width="2.8"/></svg>
<svg style="left:1331px;top:516.9px;" width="15" height="16" viewBox="0 0 15 16" preserveAspectRatio="none"><circle cx="7.5" cy="9.3" r="5.7" fill="none" stroke="#888" stroke-width="1.7"/><path d="M5.3 1.2h4.4M7.5 1.2v2.4M12.2 3.6l1.4 1.4M7.5 9.5V6.6M7.5 9.5H5.4" fill="none" stroke="#888" stroke-width="1.6"/></svg>
<div class="a" style="left:1358.5px;top:512.87px;font-size:19.5px;color:#777;font-weight:normal;font-family:'Liberation Sans',sans-serif;letter-spacing:0.35px">00:02:06</div>
<svg style="left:1314.5px;top:545.1px;" width="16" height="16" viewBox="0 0 16 16" preserveAspectRatio="none"><rect x="0.8" y="2.6" width="14.4" height="12.6" rx="1" fill="#fff" stroke="#8a8a8a" stroke-width="1.5"/><rect x="0.8" y="2.6" width="14.4" height="3" fill="#8a8a8a"/><path d="M4.4 5.5v9.7M8 5.5v9.7M11.6 5.5v9.7M0.8 8.7h14.4M0.8 12h14.4" stroke="#9a9a9a" stroke-width="1.1"/><rect x="3.4" y="0.2" width="1.7" height="3.8" rx="0.8" fill="#8a8a8a"/><rect x="10.9" y="0.2" width="1.7" height="3.8" rx="0.8" fill="#8a8a8a"/></svg>
<div class="a" style="right:344.8px;top:541.57px;font-size:19.5px;color:#777">3 days ago</div>
<div style="position:absolute;left:323px;top:696px;width:1441px;height:1px;background:#efefef"></div>
<div style="position:absolute;left:323px;top:628.8px;width:108px;height:34px;border:1.6px solid #2aa764;border-radius:5px;background:#fff"></div>
<svg style="left:334px;top:636.8px;" width="18" height="18" viewBox="0 0 18 18" preserveAspectRatio="none"><circle cx="9" cy="9" r="7.9" fill="none" stroke="#2aa764" stroke-width="1.3"/><path d="M5.6 9.3l2.3 2.3 4.5-4.5" fill="none" stroke="#2aa764" stroke-width="1.8"/></svg>
<div class="a" style="left:358.0px;top:636.14px;font-size:19.6px;color:#2aa764;font-weight:normal;font-family:'Liberation Sans',sans-serif;">passed</div>
<div class="a" style="left:485.0px;top:634.87px;font-size:19.8px;color:#2e2e2e;font-weight:normal;font-family:'Liberation Sans',sans-serif;">#6 by</div>
<svg style="left:540.5px;top:634.5px" width="25" height="25" viewBox="0 0 25 25"><g fill="#47d3a6"><path d="M9.8 6.2l3.2 3.2-3.2 3.2-3.2-3.2z M15.8 6.2l3.2 3.2-3.2 3.2-3.2-3.2z M9.8 12.2l3.2 3.2-3.2 3.2-3.2-3.2z M15.8 12.2l3.2 3.2-3.2 3.2-3.2-3.2z"/><path d="M10.2 0h3.4l-1.6 2.8z M2.8 2.2l4.2 0.8-3.4 5.6z M16 6.5h7.6l-3.2-3.6z M22.2 12.8l3.2-3-0.2 3.4z M0 12h3.6l-3 3z M1.8 17.8h7.4l-4.8 4.4z M18.8 16l3.6 3.6-3.2 3.4z M12.4 22l3.4 1.6-3.2 1.6z"/></g></svg>
<svg style="left:728px;top:622.3px;" width="13" height="17" viewBox="0 0 13 17" preserveAspectRatio="none"><circle cx="2.8" cy="2.8" r="1.9" fill="none" stroke="#777" stroke-width="1.4"/><circle cx="10.2" cy="2.8" r="1.9" fill="none" stroke="#777" stroke-width="1.4"/><circle cx="6.5" cy="14.2" r="1.9" fill="none" stroke="#777" stroke-width="1.4"/><path d="M2.8 4.7c0 3.5 3.7 3.5 3.7 7.6M10.2 4.7c0 3.5-3.7 3.5-3.7 7.6" fill="none" stroke="#777" stroke-width="1.4"/></svg>
<div class="a" style="left:744.4px;top:622.68px;font-size:19.5px;color:#303030;font-weight:bold;font-family:'Liberation Mono',monospace;letter-spacing:-0.8px">2-add-testi…</div>
<svg style="left:886px;top:627.5px;" width="20" height="10" viewBox="0 0 20 10" preserveAspectRatio="none"><circle cx="10" cy="5" r="3.6" fill="none" stroke="#777" stroke-width="2.2"/><path d="M0.5 5h5.5M14 5h5.5" stroke="#777" stroke-width="2.2"/></svg>
<div class="a" style="left:912.0px;top:623.36px;font-size:18.6px;color:#2f75b8;font-weight:normal;font-family:'Liberation Mono',monospace;-webkit-text-stroke:0.25px #2f75b8;letter-spacing:-0.45px">a8319230</div>
<div style="position:absolute;left:726px;top:648.6px;width:25px;height:25px;border-radius:50%;background:#070707;overflow:hidden"><svg style="left:0;top:0" width="100%" height="100%" viewBox="0 0 100 100"><ellipse cx="50" cy="38" rx="34.5" ry="38" fill="#f9f8f8"/><path d="M20 52h60l-8 20-1.5 30h-41l-1.5-30z" fill="#f9f8f8"/><polygon points="38,24 23,46 40,64 55,46" fill="#f2a0a0" opacity="0.55"/><ellipse cx="37" cy="47" rx="9" ry="6.5" fill="#3d0808"/><ellipse cx="64" cy="47" rx="8.5" ry="6.5" fill="#0a0a0a"/><path d="M50 52l-5 9h10z" fill="#3a2020"/><path d="M31 76 Q50 83 69 76" fill="none" stroke="#2a2a2a" stroke-width="3.5"/></svg></div>
<div class="a" style="left:764.0px;top:649.18px;font-size:19.9px;color:#2e2e2e;font-weight:normal;font-family:'Liberation Sans',sans-serif;">adding git install to CI/CD ...</div>
<svg style="left:1047px;top:631.5px;" width="30" height="30" viewBox="0 0 30 30" preserveAspectRatio="none"><circle cx="15" cy="15" r="14" fill="#fff" stroke="#2aa764" stroke-width="1.5"/><path d="M9.8 15.3l3.6 3.4 6.8-6.8" fill="none" stroke="#2aa764" stroke-width="2.8"/></svg>
<svg style="left:1331px;top:625.2px;" width="15" height="16" viewBox="0 0 15 16" preserveAspectRatio="none"><circle cx="7.5" cy="9.3" r="5.7" fill="none" stroke="#888" stroke-width="1.7"/><path d="M5.3 1.2h4.4M7.5 1.2v2.4M12.2 3.6l1.4 1.4M7.5 9.5V6.6M7.5 9.5H5.4" fill="none" stroke="#888" stroke-width="1.6"/></svg>
<div class="a" style="left:1358.5px;top:621.12px;font-size:19.5px;color:#777;font-weight:normal;font-family:'Liberation Sans',sans-serif;letter-spacing:0.35px">00:02:09</div>
<svg style="left:1314.5px;top:653.4px;" width="16" height="16" viewBox="0 0 16 16" preserveAspectRatio="none"><rect x="0.8" y="2.6" width="14.4" height="12.6" rx="1" fill="#fff" stroke="#8a8a8a" stroke-width="1.5"/><rect x="0.8" y="2.6" width="14.4" height="3" fill="#8a8a8a"/><path d="M4.4 5.5v9.7M8 5.5v9.7M11.6 5.5v9.7M0.8 8.7h14.4M0.8 12h14.4" stroke="#9a9a9a" stroke-width="1.1"/><rect x="3.4" y="0.2" width="1.7" height="3.8" rx="0.8" fill="#8a8a8a"/><rect x="10.9" y="0.2" width="1.7" height="3.8" rx="0.8" fill="#8a8a8a"/></svg>
<div class="a" style="right:344.8px;top:649.82px;font-size:19.5px;color:#777">1 week ago</div>
<div style="position:absolute;left:323px;top:802px;width:1441px;height:1px;background:#efefef"></div>
<div style="position:absolute;left:323px;top:734.3px;width:93px;height:34px;border:1.6px solid #d5573d;border-radius:5px;background:#fff"></div>
<svg style="left:334px;top:742.3px;" width="18" height="18" viewBox="0 0 18 18" preserveAspectRatio="none"><circle cx="9" cy="9" r="7.9" fill="none" stroke="#d5573d" stroke-width="1.3"/><path d="M6.6 6.6l4.8 4.8M11.4 6.6l-4.8 4.8" fill="none" stroke="#d5573d" stroke-width="1.6"/></svg>
<div class="a" style="left:358.0px;top:741.64px;font-size:19.6px;color:#d5573d;font-weight:normal;font-family:'Liberation Sans',sans-serif;">failed</div>
<div class="a" style="left:485.0px;top:740.37px;font-size:19.8px;color:#2e2e2e;font-weight:normal;font-family:'Liberation Sans',sans-serif;">#5 by</div>
<svg style="left:540.5px;top:740.0px" width="25" height="25" viewBox="0 0 25 25"><g fill="#47d3a6"><path d="M9.8 6.2l3.2 3.2-3.2 3.2-3.2-3.2z M15.8 6.2l3.2 3.2-3.2 3.2-3.2-3.2z M9.8 12.2l3.2 3.2-3.2 3.2-3.2-3.2z M15.8 12.2l3.2 3.2-3.2 3.2-3.2-3.2z"/><path d="M10.2 0h3.4l-1.6 2.8z M2.8 2.2l4.2 0.8-3.4 5.6z M16 6.5h7.6l-3.2-3.6z M22.2 12.8l3.2-3-0.2 3.4z M0 12h3.6l-3 3z M1.8 17.8h7.4l-4.8 4.4z M18.8 16l3.6 3.6-3.2 3.4z M12.4 22l3.4 1.6-3.2 1.6z"/></g></svg>
<svg style="left:728px;top:727.8px;" width="13" height="17" viewBox="0 0 13 17" preserveAspectRatio="none"><circle cx="2.8" cy="2.8" r="1.9" fill="none" stroke="#777" stroke-width="1.4"/><circle cx="10.2" cy="2.8" r="1.9" fill="none" stroke="#777" stroke-width="1.4"/><circle cx="6.5" cy="14.2" r="1.9" fill="none" stroke="#777" stroke-width="1.4"/><path d="M2.8 4.7c0 3.5 3.7 3.5 3.7 7.6M10.2 4.7c0 3.5-3.7 3.5-3.7 7.6" fill="none" stroke="#777" stroke-width="1.4"/></svg>
<div class="a" style="left:744.4px;top:728.18px;font-size:19.5px;color:#303030;font-weight:bold;font-family:'Liberation Mono',monospace;letter-spacing:-0.8px">2-add-testi…</div>
<svg style="left:886px;top:733.0px;" width="20" height="10" viewBox="0 0 20 10" preserveAspectRatio="none"><circle cx="10" cy="5" r="3.6" fill="none" stroke="#777" stroke-width="2.2"/><path d="M0.5 5h5.5M14 5h5.5" stroke="#777" stroke-width="2.2"/></svg>
<div class="a" style="left:912.0px;top:728.86px;font-size:18.6px;color:#2f75b8;font-weight:normal;font-family:'Liberation Mono',monospace;-webkit-text-stroke:0.25px #2f75b8;letter-spacing:-0.45px">0406088e</div>
<div style="position:absolute;left:726px;top:754.1px;width:25px;height:25px;border-radius:50%;background:#070707;overflow:hidden"><svg style="left:0;top:0" width="100%" height="100%" viewBox="0 0 100 100"><ellipse cx="50" cy="38" rx="34.5" ry="38" fill="#f9f8f8"/><path d="M20 52h60l-8 20-1.5 30h-41l-1.5-30z" fill="#f9f8f8"/><polygon points="38,24 23,46 40,64 55,46" fill="#f2a0a0" opacity="0.55"/><ellipse cx="37" cy="47" rx="9" ry="6.5" fill="#3d0808"/><ellipse cx="64" cy="47" rx="8.5" ry="6.5" fill="#0a0a0a"/><path d="M50 52l-5 9h10z" fill="#3a2020"/><path d="M31 76 Q50 83 69 76" fill="none" stroke="#2a2a2a" stroke-width="3.5"/></svg></div>
<div class="a" style="left:764.0px;top:754.68px;font-size:19.9px;color:#2e2e2e;font-weight:normal;font-family:'Liberation Sans',sans-serif;">adding php-xml package t...</div>
<svg style="left:1047px;top:737.0px;" width="30" height="30" viewBox="0 0 30 30" preserveAspectRatio="none"><circle cx="15" cy="15" r="14" fill="#fff" stroke="#d5573d" stroke-width="1.5"/><path d="M11.4 11.4l7.2 7.2M18.6 11.4l-7.2 7.2" fill="none" stroke="#e0452c" stroke-width="2.6"/></svg>
<svg style="left:1331px;top:730.7px;" width="15" height="16" viewBox="0 0 15 16" preserveAspectRatio="none"><circle cx="7.5" cy="9.3" r="5.7" fill="none" stroke="#888" stroke-width="1.7"/><path d="M5.3 1.2h4.4M7.5 1.2v2.4M12.2 3.6l1.4 1.4M7.5 9.5V6.6M7.5 9.5H5.4" fill="none" stroke="#888" stroke-width="1.6"/></svg>
<div class="a" style="left:1358.5px;top:726.62px;font-size:19.5px;color:#777;font-weight:normal;font-family:'Liberation Sans',sans-serif;letter-spacing:0.35px">00:00:55</div>
<svg style="left:1314.5px;top:758.9px;" width="16" height="16" viewBox="0 0 16 16" preserveAspectRatio="none"><rect x="0.8" y="2.6" width="14.4" height="12.6" rx="1" fill="#fff" stroke="#8a8a8a" stroke-width="1.5"/><rect x="0.8" y="2.6" width="14.4" height="3" fill="#8a8a8a"/><path d="M4.4 5.5v9.7M8 5.5v9.7M11.6 5.5v9.7M0.8 8.7h14.4M0.8 12h14.4" stroke="#9a9a9a" stroke-width="1.1"/><rect x="3.4" y="0.2" width="1.7" height="3.8" rx="0.8" fill="#8a8a8a"/><rect x="10.9" y="0.2" width="1.7" height="3.8" rx="0.8" fill="#8a8a8a"/></svg>
<div class="a" style="right:344.8px;top:755.32px;font-size:19.5px;color:#777">1 week ago</div>
<div style="position:absolute;left:1708px;top:726.6px;width:51px;height:47px;border:1px solid #e5e5e5;border-radius:4px;background:#fff"></div>
<svg style="left:1723px;top:739.6px;" width="21" height="20" viewBox="0 0 21 20" preserveAspectRatio="none"><path d="M16.5 12.5 A7.5 7.5 0 1 1 14.8 5.2" fill="none" stroke="#777" stroke-width="2.6"/><path d="M11.5 6.8l7.5 0.8-0.7-7.3z" fill="#777"/></svg>
<div style="position:absolute;left:323px;top:839.9px;width:93px;height:34px;border:1.6px solid #d5573d;border-radius:5px;background:#fff"></div>
<svg style="left:334px;top:847.9px;" width="18" height="18" viewBox="0 0 18 18" preserveAspectRatio="none"><circle cx="9" cy="9" r="7.9" fill="none" stroke="#d5573d" stroke-width="1.3"/><path d="M6.6 6.6l4.8 4.8M11.4 6.6l-4.8 4.8" fill="none" stroke="#d5573d" stroke-width="1.6"/></svg>
<div class="a" style="left:358.0px;top:847.24px;font-size:19.6px;color:#d5573d;font-weight:normal;font-family:'Liberation Sans',sans-serif;">failed</div>
<div class="a" style="left:485.0px;top:845.97px;font-size:19.8px;color:#2e2e2e;font-weight:normal;font-family:'Liberation Sans',sans-serif;">#4 by</div>
<svg style="left:540.5px;top:845.6px" width="25" height="25" viewBox="0 0 25 25"><g fill="#47d3a6"><path d="M9.8 6.2l3.2 3.2-3.2 3.2-3.2-3.2z M15.8 6.2l3.2 3.2-3.2 3.2-3.2-3.2z M9.8 12.2l3.2 3.2-3.2 3.2-3.2-3.2z M15.8 12.2l3.2 3.2-3.2 3.2-3.2-3.2z"/><path d="M10.2 0h3.4l-1.6 2.8z M2.8 2.2l4.2 0.8-3.4 5.6z M16 6.5h7.6l-3.2-3.6z M22.2 12.8l3.2-3-0.2 3.4z M0 12h3.6l-3 3z M1.8 17.8h7.4l-4.8 4.4z M18.8 16l3.6 3.6-3.2 3.4z M12.4 22l3.4 1.6-3.2 1.6z"/></g></svg>
<svg style="left:728px;top:833.4px;" width="13" height="17" viewBox="0 0 13 17" preserveAspectRatio="none"><circle cx="2.8" cy="2.8" r="1.9" fill="none" stroke="#777" stroke-width="1.4"/><circle cx="10.2" cy="2.8" r="1.9" fill="none" stroke="#777" stroke-width="1.4"/><circle cx="6.5" cy="14.2" r="1.9" fill="none" stroke="#777" stroke-width="1.4"/><path d="M2.8 4.7c0 3.5 3.7 3.5 3.7 7.6M10.2 4.7c0 3.5-3.7 3.5-3.7 7.6" fill="none" stroke="#777" stroke-width="1.4"/></svg>
<div class="a" style="left:744.4px;top:833.78px;font-size:19.5px;color:#303030;font-weight:bold;font-family:'Liberation Mono',monospace;letter-spacing:-0.8px">2-add-testi…</div>
<svg style="left:886px;top:838.6px;" width="20" height="10" viewBox="0 0 20 10" preserveAspectRatio="none"><circle cx="10" cy="5" r="3.6" fill="none" stroke="#777" stroke-width="2.2"/><path d="M0.5 5h5.5M14 5h5.5" stroke="#777" stroke-width="2.2"/></svg>
<div class="a" style="left:912.0px;top:834.46px;font-size:18.6px;color:#2f75b8;font-weight:normal;font-family:'Liberation Mono',monospace;-webkit-text-stroke:0.25px #2f75b8;letter-spacing:-0.45px">d7a00f3f</div>
<div style="position:absolute;left:726px;top:859.7px;width:25px;height:25px;border-radius:50%;background:#070707;overflow:hidden"><svg style="left:0;top:0" width="100%" height="100%" viewBox="0 0 100 100"><ellipse cx="50" cy="38" rx="34.5" ry="38" fill="#f9f8f8"/><path d="M20 52h60l-8 20-1.5 30h-41l-1.5-30z" fill="#f9f8f8"/><polygon points="38,24 23,46 40,64 55,46" fill="#f2a0a0" opacity="0.55"/><ellipse cx="37" cy="47" rx="9" ry="6.5" fill="#3d0808"/><ellipse cx="64" cy="47" rx="8.5" ry="6.5" fill="#0a0a0a"/><path d="M50 52l-5 9h10z" fill="#3a2020"/><path d="M31 76 Q50 83 69 76" fill="none" stroke="#2a2a2a" stroke-width="3.5"/></svg></div>
<div class="a" style="left:764.0px;top:860.29px;font-size:19.9px;color:#2e2e2e;font-weight:normal;font-family:'Liberation Sans',sans-serif;">adding ca-certificates pac...</div>
<svg style="left:1047px;top:842.6px;" width="30" height="30" viewBox="0 0 30 30" preserveAspectRatio="none"><circle cx="15" cy="15" r="14" fill="#fff" stroke="#d5573d" stroke-width="1.5"/><path d="M11.4 11.4l7.2 7.2M18.6 11.4l-7.2 7.2" fill="none" stroke="#e0452c" stroke-width="2.6"/></svg>
<svg style="left:1331px;top:836.3px;" width="15" height="16" viewBox="0 0 15 16" preserveAspectRatio="none"><circle cx="7.5" cy="9.3" r="5.7" fill="none" stroke="#888" stroke-width="1.7"/><path d="M5.3 1.2h4.4M7.5 1.2v2.4M12.2 3.6l1.4 1.4M7.5 9.5V6.6M7.5 9.5H5.4" fill="none" stroke="#888" stroke-width="1.6"/></svg>
<div class="a" style="left:1358.5px;top:832.23px;font-size:19.5px;color:#777;font-weight:normal;font-family:'Liberation Sans',sans-serif;letter-spacing:0.35px">00:00:52</div>
<svg style="left:1314.5px;top:864.5px;" width="16" height="16" viewBox="0 0 16 16" preserveAspectRatio="none"><rect x="0.8" y="2.6" width="14.4" height="12.6" rx="1" fill="#fff" stroke="#8a8a8a" stroke-width="1.5"/><rect x="0.8" y="2.6" width="14.4" height="3" fill="#8a8a8a"/><path d="M4.4 5.5v9.7M8 5.5v9.7M11.6 5.5v9.7M0.8 8.7h14.4M0.8 12h14.4" stroke="#9a9a9a" stroke-width="1.1"/><rect x="3.4" y="0.2" width="1.7" height="3.8" rx="0.8" fill="#8a8a8a"/><rect x="10.9" y="0.2" width="1.7" height="3.8" rx="0.8" fill="#8a8a8a"/></svg>
<div class="a" style="right:344.8px;top:860.92px;font-size:19.5px;color:#777">1 week ago</div>
<div style="position:absolute;left:1708px;top:832.2px;width:51px;height:47px;border:1px solid #e5e5e5;border-radius:4px;background:#fff"></div>
<svg style="left:1723px;top:845.2px;" width="21" height="20" viewBox="0 0 21 20" preserveAspectRatio="none"><path d="M16.5 12.5 A7.5 7.5 0 1 1 14.8 5.2" fill="none" stroke="#777" stroke-width="2.6"/><path d="M11.5 6.8l7.5 0.8-0.7-7.3z" fill="#777"/></svg>
<div style="position:absolute;left:0px;top:49px;width:1782px;height:1px;background:#ebebf4"></div>
</body></html>
